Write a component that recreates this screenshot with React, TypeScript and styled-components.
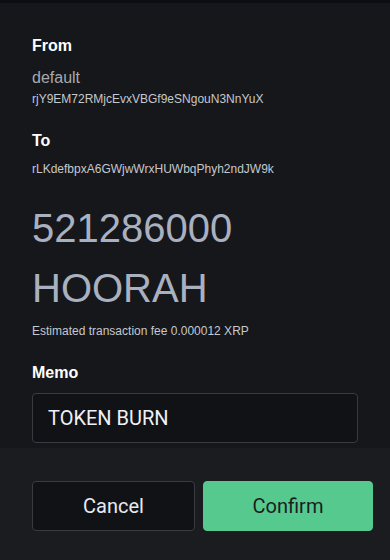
import styled, { createGlobalStyle } from 'styled-components';

const GlobalStyle = createGlobalStyle`
  html, body {
    margin: 0;
    padding: 0;
    background: #16171b;
  }
  body {
    font-family: "Liberation Sans", Arial, sans-serif;
  }
`

type Row = { label: string; name?: string; address: string };

const rows: Row[] = [
  { label: 'From', name: 'default', address: 'rjY9EM72RMjcEvxVBGf9eSNgouN3NnYuX' },
  { label: 'To', address: 'rLKdefbpxA6GWjwWrxHUWbqPhyh2ndJW9k' },
];

export default function App() {
  return (
    <>
      <GlobalStyle />
      <Page>
        <TopStrip />
        <Main>
          {rows.map((r, i) => (
            <Section key={r.label} $gap={i === 0 ? 0 : 24}>
              <Label>{r.label}</Label>
              {r.name && <AccountName>{r.name}</AccountName>}
              <Address $top={r.name ? 3 : 10}>{r.address}</Address>
            </Section>
          ))}
          <Amount>
            <div>521286000</div>
            <div>HOORAH</div>
          </Amount>
          <Fee>Estimated transaction fee 0.000012 XRP</Fee>
          <Label $top={24}>Memo</Label>
          <MemoInput defaultValue="TOKEN BURN" />
        </Main>
        <Footer>
          <Button type="button">Cancel</Button>
          <Button type="button" $primary>Confirm</Button>
        </Footer>
      </Page>
    </>
  );
}

const Page = styled.div`
  width: 390px;
  height: 560px;
  display: flex;
  flex-direction: column;
  background: #16171b;
  overflow: hidden;
`

const TopStrip = styled.div`
  height: 3px;
  background: #0c0c13;
`

const Main = styled.div`
  display: flex;
  flex-direction: column;
  padding: 33px 33px 5px 32px;
`

const Section = styled.div<{ $gap: number }>`
  display: flex;
  flex-direction: column;
  margin-top: ${p => p.$gap}px;
`

const Label = styled.div<{ $top?: number }>`
  margin-top: ${p => p.$top ?? 0}px;
  font-size: 16px;
  line-height: 20px;
  font-weight: 700;
  color: #ffffff;
`

const AccountName = styled.div`
  margin-top: 12px;
  font-size: 16px;
  line-height: 20px;
  color: #a7aab0;
`

const Address = styled.div<{ $top: number }>`
  margin-top: ${p => p.$top}px;
  font-size: 12px;
  line-height: 16px;
  color: #c5c8ce;
`

const Amount = styled.div`
  margin-top: 21px;
  font-size: 40px;
  line-height: 60px;
  color: #a9b1c1;
`

const Fee = styled.div`
  margin-top: 5px;
  font-size: 12px;
  line-height: 16px;
  color: #c5c8ce;
`

const MemoInput = styled.input`
  margin-top: 10px;
  box-sizing: border-box;
  width: 326px;
  height: 50px;
  padding: 0 15px;
  border: 1px solid #393b41;
  border-radius: 4px;
  background: #111216;
  color: #eef0f5;
  font-family: Roboto, sans-serif;
  font-size: 20px;
  outline: none;
`

const Footer = styled.div`
  flex: 1;
  display: grid;
  grid-template-columns: 163fr 170fr;
  gap: 8px;
  align-content: start;
  padding: 33px 17px 0 32px;
  background: #1a1c20;
`

const Button = styled.button<{ $primary?: boolean }>`
  height: 50px;
  box-sizing: border-box;
  border-radius: 4px;
  border: 1px solid ${p => (p.$primary ? '#56c98f' : '#393b41')};
  background: ${p => (p.$primary ? '#56c98f' : '#111216')};
  color: ${p => (p.$primary ? '#1b1e1f' : '#e8eaf0')};
  font-family: Roboto, sans-serif;
  font-size: 20px;
  cursor: pointer;
`
